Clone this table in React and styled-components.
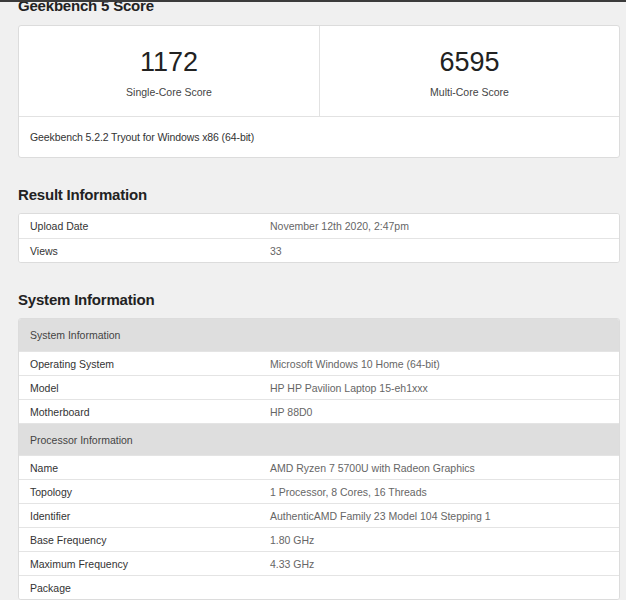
import React from "react";
import styled, { createGlobalStyle } from "styled-components";

const GlobalStyle = createGlobalStyle`
  html, body {
    margin: 0;
    padding: 0;
    background: #f0f0f0;
    font-family: "Liberation Sans", Arial, sans-serif;
  }
  *, *::before, *::after {
    box-sizing: border-box;
  }
`;

const Page = styled.div`
  border-top: 2px solid #3b3b3b;
  overflow: hidden;
  padding: 0 6px 40px 18px;
  min-height: 600px;
`;

const Heading = styled.h2`
  margin: 27px 0 8px;
  font-size: 15px;
  line-height: 20px;
  font-weight: bold;
  color: #222;
  letter-spacing: -0.2px;
  &:first-child {
    margin-top: -6px;
    margin-bottom: 9px;
  }
`;

const Card = styled.div`
  background: #fff;
  border: 1px solid #dcdcdc;
  border-radius: 3px;
  overflow: hidden;
`;

const ScoreRow = styled.div`
  display: grid;
  grid-template-columns: 1fr 1fr;
  border-bottom: 1px solid #e2e2e2;
`;

const ScoreCell = styled.div`
  text-align: center;
  padding: 20px 0 17px;
  & + & {
    border-left: 1px solid #e2e2e2;
  }
`;

const ScoreValue = styled.div`
  font-size: 27px;
  line-height: 32px;
  color: #222;
`;

const ScoreLabel = styled.div`
  margin-top: 7px;
  font-size: 10.5px;
  line-height: 14px;
  color: #444;
`;

const CardFooter = styled.div`
  display: flex;
  align-items: center;
  height: 40px;
  padding: 0 11px;
  font-size: 10.5px;
  letter-spacing: -0.1px;
  color: #333;
`;

const Row = styled.div`
  display: grid;
  grid-template-columns: 240px 1fr;
  height: 24px;
  align-items: center;
  font-size: 10.5px;
  background: #fff;
  & + & {
    border-top: 1px solid #e4e4e4;
  }
`;

const HeaderRow = styled(Row)`
  display: flex;
  height: 32px;
  padding: 0 11px;
  background: #dedede;
  color: #444;
`;

const Label = styled.span`
  padding: 0 11px;
  color: #333;
`;

const Value = styled.span`
  padding: 0 11px;
  color: #666;
`;

const resultInfo = [
  ["Upload Date", "November 12th 2020, 2:47pm"],
  ["Views", "33"],
];

const systemInfo = [
  { header: "System Information" },
  ["Operating System", "Microsoft Windows 10 Home (64-bit)"],
  ["Model", "HP HP Pavilion Laptop 15-eh1xxx"],
  ["Motherboard", "HP 88D0"],
  { header: "Processor Information" },
  ["Name", "AMD Ryzen 7 5700U with Radeon Graphics"],
  ["Topology", "1 Processor, 8 Cores, 16 Threads"],
  ["Identifier", "AuthenticAMD Family 23 Model 104 Stepping 1"],
  ["Base Frequency", "1.80 GHz"],
  ["Maximum Frequency", "4.33 GHz"],
  ["Package", ""],
];

const InfoTable = ({ rows }) => (
  <Card>
    {rows.map((r, i) =>
      r.header ? (
        <HeaderRow key={i}>{r.header}</HeaderRow>
      ) : (
        <Row key={i}>
          <Label>{r[0]}</Label>
          <Value>{r[1]}</Value>
        </Row>
      )
    )}
  </Card>
);

export default function App() {
  return (
    <>
      <GlobalStyle />
      <Page>
        <Heading>Geekbench 5 Score</Heading>
        <Card>
          <ScoreRow>
            <ScoreCell>
              <ScoreValue>1172</ScoreValue>
              <ScoreLabel>Single-Core Score</ScoreLabel>
            </ScoreCell>
            <ScoreCell>
              <ScoreValue>6595</ScoreValue>
              <ScoreLabel>Multi-Core Score</ScoreLabel>
            </ScoreCell>
          </ScoreRow>
          <CardFooter>Geekbench 5.2.2 Tryout for Windows x86 (64-bit)</CardFooter>
        </Card>

        <Heading>Result Information</Heading>
        <InfoTable rows={resultInfo} />

        <Heading>System Information</Heading>
        <InfoTable rows={systemInfo} />
      </Page>
    </>
  );
}
